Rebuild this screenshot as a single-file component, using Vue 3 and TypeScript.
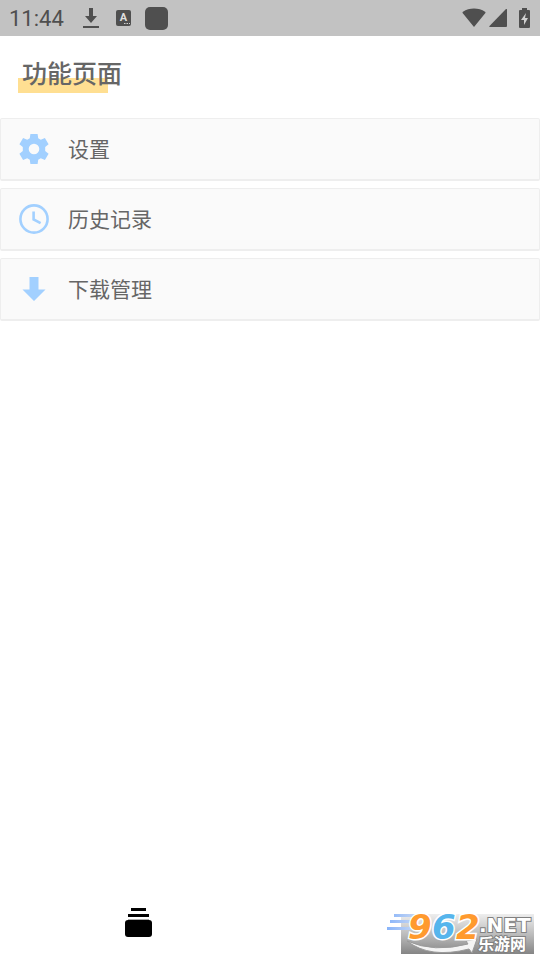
<script setup lang="ts">
type IconName = 'gear' | 'clock' | 'arrow'

interface MenuEntry {
  label: string
  icon: IconName
}

const title = '功能页面'
const time = '11:44'

const entries: MenuEntry[] = [
  { label: '设置', icon: 'gear' },
  { label: '历史记录', icon: 'clock' },
  { label: '下载管理', icon: 'arrow' },
]
</script>

<template>
  <div class="screen">
    <header class="status">
      <div class="group notices">
        <span class="time">{{ time }}</span>
        <svg class="download" width="16" height="20" viewBox="0 0 16 20" aria-hidden="true">
          <path d="M6 0h4v8h4l-6 7-6-7h4z" />
          <path d="M0 18h16v2H0z" />
        </svg>
        <svg class="keyboard" width="16" height="16" viewBox="0 0 16 16" aria-hidden="true">
          <rect width="15" height="16" rx="2" />
          <text x="7.5" y="11" text-anchor="middle">A</text>
          <path class="dots" d="M8 13h1.500v1H8zM10.500 13H12v1h-1.500zM13 13h1v1h-1z" />
        </svg>
        <span class="app-tile"></span>
      </div>
      <div class="group signals">
        <svg width="24" height="20" viewBox="0 0 24 20" aria-hidden="true">
          <path d="M12 19 1 5.500Q0 4.500 1 3.800C7-.5 17-.5 23 3.800q1 .7 0 1.700z" />
        </svg>
        <svg width="18" height="18" viewBox="0 0 18 18" aria-hidden="true">
          <path d="M17 0q1-.6 1 1v16q0 1-1 1H1q-1.300 0-.5-1z" />
        </svg>
        <svg class="battery" width="11" height="20" viewBox="0 0 11 20" aria-hidden="true">
          <path d="M3 0h5v2h2q1 0 1 1v16q0 1-1 1H1q-1 0-1-1V3q0-1 1-1h2z" />
          <path class="bolt" d="M7 5 2 12h3v5l4-7H6z" />
        </svg>
      </div>
    </header>

    <main class="content">
      <div class="heading">
        <h1>{{ title }}</h1>
      </div>
      <nav class="menu">
        <button v-for="entry in entries" :key="entry.label" type="button" class="entry">
          <svg v-if="entry.icon === 'gear'" width="30" height="30" viewBox="0 0 30 30" aria-hidden="true">
            <path
              fill-rule="evenodd"
              d="M11.400 0h7.200l.6 4.200 2.600 1.500 4.100-1.600 3.700 6.200-3.400 2.800v3.800l3.400 2.800-3.700 6.200-4.100-1.600-2.600 1.500-.6 4.200h-7.200l-.6-4.200-2.600-1.500-4.100 1.600L.4 19.700l3.400-2.800v-3.800L.4 10.300l3.700-6.200 4.100 1.600 2.600-1.500zM15 9.700a5.300 5.300 0 1 0 0 10.600 5.300 5.300 0 0 0 0-10.600z"
            />
          </svg>
          <svg v-else-if="entry.icon === 'clock'" class="line" width="30" height="30" viewBox="0 0 30 30" aria-hidden="true">
            <circle cx="15" cy="15" r="13.600" />
            <path d="M14.600 7.500v8l7 3.600" />
          </svg>
          <svg v-else width="30" height="30" viewBox="0 0 30 30" aria-hidden="true">
            <path d="M10.500 3h9v12.500h7L15 27 3.500 15.500h7z" />
          </svg>
          <span>{{ entry.label }}</span>
        </button>
      </nav>
    </main>

    <footer class="tabs">
      <button type="button" class="tab" aria-label="功能页面">
        <svg width="27" height="30" viewBox="0 0 27 30" aria-hidden="true">
          <path d="M6 0h15v3H6zM3 6h21v3H3z" />
          <path class="shade" d="M3 11h21v1H3z" />
          <path d="M3 12h21q3 0 3 3v11q0 3-3 3H3q-3 0-3-3V15q0-3 3-3z" />
        </svg>
      </button>
    </footer>

    <svg class="badge" width="150" height="58" viewBox="0 -6 150 58" role="img" aria-label="962.NET 乐游网">
      <defs>
        <linearGradient id="plate" x1="0" y1="0" x2="0" y2="1">
          <stop offset="0" stop-color="#eeeeee" />
          <stop offset="0.5" stop-color="#bdbdbd" />
          <stop offset="1" stop-color="#858585" />
        </linearGradient>
        <linearGradient id="speed" x1="0" y1="0" x2="1" y2="0">
          <stop offset="0" stop-color="#88b4fa" />
          <stop offset="1" stop-color="#c3d5f4" />
        </linearGradient>
      </defs>
      <rect x="15" y="6" width="133" height="40" fill="url(#plate)" />
      <path fill="url(#speed)" d="M8 6h21v3H8zM4 12h23v3H4zM1 19h24v3H1z" />
      <path class="swoosh" d="M21 33q27 12 61 3l-2-3 11-2-5 14-3-4Q44 51 21 33z" />
      <g class="digits">
        <text class="orange" x="22" y="31">9</text>
        <text class="blue" x="46" y="31">6</text>
        <text class="orange" x="70" y="31">2</text>
      </g>
      <text class="net" x="93" y="24">.NET</text>
      <text class="site" x="92" y="42">乐游网</text>
    </svg>
  </div>
</template>

<style>
body {
  margin: 0;
  background: #fff;
}
</style>

<style scoped>
.screen {
  position: relative;
  display: flex;
  flex-direction: column;
  min-height: 100vh;
  overflow: hidden;
  background: #fff;
  color: #666;
  font-family: Roboto, "Noto Sans CJK SC", sans-serif;
}

.status {
  display: flex;
  align-items: center;
  justify-content: space-between;
  box-sizing: border-box;
  height: 36px;
  padding: 0 10px 0 9px;
  background: #c2c2c2;
  color: #4f4f4f;
}

.status svg {
  fill: #4f4f4f;
}

.group {
  display: flex;
  align-items: center;
}

.time {
  width: 74px;
  padding-top: 2px;
  font-size: 22px;
  line-height: 34px;
}

.download {
  margin-right: 17px;
}

.keyboard {
  margin-right: 13px;
}

.keyboard text {
  fill: #dedede;
  font-size: 11px;
  font-weight: 700;
}

.keyboard .dots,
.battery .bolt {
  fill: #d0d0d0;
}

.app-tile {
  width: 23px;
  height: 23px;
  border-radius: 5px;
  background: #4f4f4f;
}

.signals {
  gap: 3px;
  padding-bottom: 1px;
}

.battery {
  margin-left: 9px;
}

.content {
  flex: 1;
}

.heading {
  padding: 18px 18px 25px;
}

h1 {
  width: fit-content;
  margin: 0;
  padding: 2px 4px 0;
  background: linear-gradient(#ffdf92, #ffdf92) 0 24px / 90px 15px no-repeat;
  font-size: 25px;
  font-weight: 500;
  line-height: 37px;
}

.menu {
  display: flex;
  flex-direction: column;
  gap: 7px;
}

.entry {
  display: flex;
  align-items: center;
  gap: 19px;
  width: 100%;
  height: 63px;
  padding: 0 18px;
  border: 1px solid #eee;
  border-bottom-width: 2px;
  border-radius: 2px;
  background: #fafafa;
  color: #666;
  font: inherit;
  font-size: 21px;
  line-height: 30px;
  text-align: left;
}

.entry span {
  padding-top: 2px;
}

.entry svg {
  flex: none;
  fill: #a2d0ff;
}

.entry .line {
  fill: none;
  stroke: #a2d0ff;
  stroke-width: 2.6px;
}

.tabs {
  display: grid;
  grid-template-columns: 1fr 1fr;
  padding: 0 0 22px 4px;
}

.tab {
  display: flex;
  justify-content: center;
  padding: 0;
  border: 0;
  background: none;
}

.shade {
  fill: #aaa;
}

.badge {
  position: absolute;
  right: 4px;
  bottom: 0;
}

.digits {
  font-family: "DejaVu Sans", sans-serif;
  font-size: 34px;
  font-style: italic;
  font-weight: 700;
  paint-order: stroke;
  stroke: #fff;
  stroke-width: 3px;
}

.orange {
  fill: #ff9a2e;
}

.blue {
  fill: #56b5ec;
}

.net,
.site {
  fill: #fff;
  font-weight: 700;
  paint-order: stroke;
  stroke: #808080;
  stroke-width: 2px;
}

.net {
  font-family: "DejaVu Sans", sans-serif;
  font-size: 20px;
}

.site {
  font-family: "Noto Sans CJK SC", sans-serif;
  font-size: 16px;
}

.swoosh {
  fill: #f4f4f4;
  stroke: #9a9a9a;
  stroke-width: 1px;
}
</style>
